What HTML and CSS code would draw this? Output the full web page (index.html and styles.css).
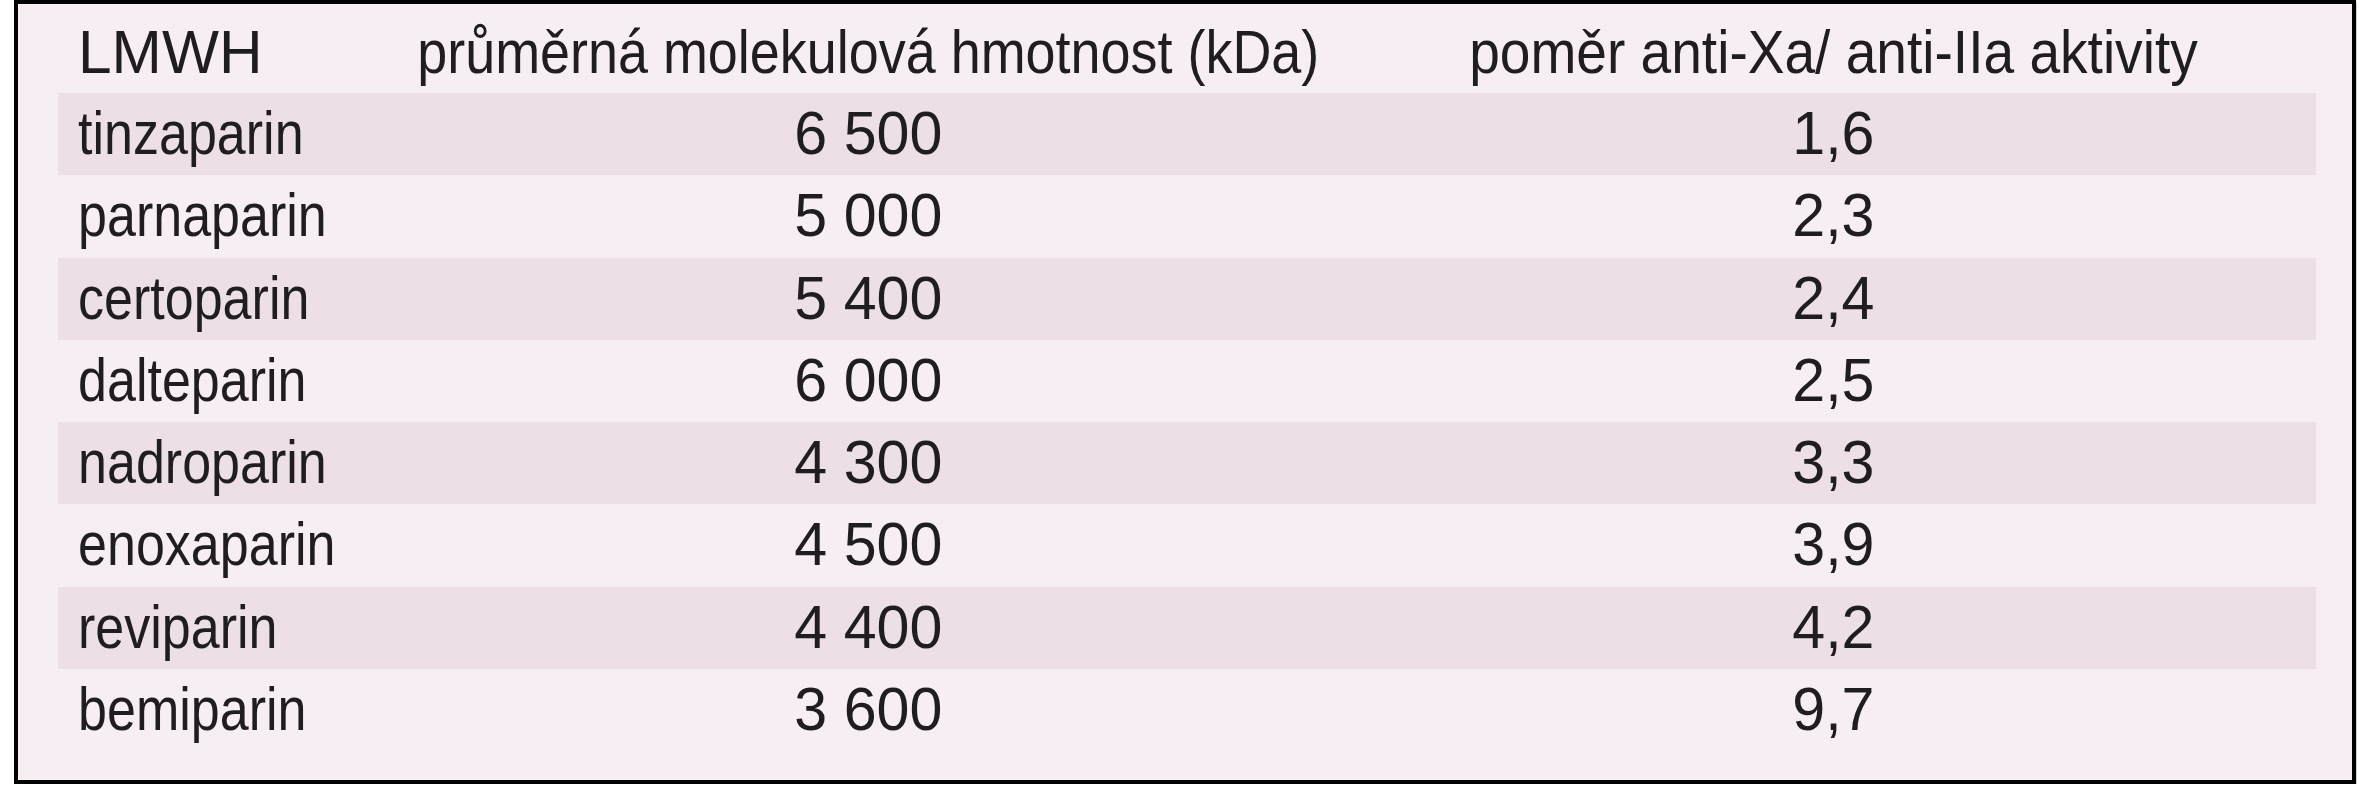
FILE: index.html
```html
<!DOCTYPE html>
<html lang="cs">
<head>
<meta charset="utf-8">
<title>LMWH</title>
<link rel="stylesheet" href="styles.css">
</head>
<body>
<div class="frame">
  <div class="table">
    <div class="row head">
      <div class="c1"><span class="t cap">LMWH</span></div>
      <div class="c2"><span class="t h2">průměrná molekulová hmotnost (kDa)</span></div>
      <div class="c3"><span class="t h3">poměr anti-Xa/ anti-IIa aktivity</span></div>
    </div>
    <div class="row odd"><div class="c1"><span class="t name">tinzaparin</span></div><div class="c2"><span class="t num">6 500</span></div><div class="c3"><span class="t num">1,6</span></div></div>
    <div class="row"><div class="c1"><span class="t name">parnaparin</span></div><div class="c2"><span class="t num">5 000</span></div><div class="c3"><span class="t num">2,3</span></div></div>
    <div class="row odd"><div class="c1"><span class="t name">certoparin</span></div><div class="c2"><span class="t num">5 400</span></div><div class="c3"><span class="t num">2,4</span></div></div>
    <div class="row"><div class="c1"><span class="t name">dalteparin</span></div><div class="c2"><span class="t num">6 000</span></div><div class="c3"><span class="t num">2,5</span></div></div>
    <div class="row odd"><div class="c1"><span class="t name">nadroparin</span></div><div class="c2"><span class="t num">4 300</span></div><div class="c3"><span class="t num">3,3</span></div></div>
    <div class="row"><div class="c1"><span class="t name">enoxaparin</span></div><div class="c2"><span class="t num">4 500</span></div><div class="c3"><span class="t num">3,9</span></div></div>
    <div class="row odd"><div class="c1"><span class="t name">reviparin</span></div><div class="c2"><span class="t num">4 400</span></div><div class="c3"><span class="t num">4,2</span></div></div>
    <div class="row"><div class="c1"><span class="t name">bemiparin</span></div><div class="c2"><span class="t num">3 600</span></div><div class="c3"><span class="t num">9,7</span></div></div>
  </div>
</div>
</body>
</html>
```
FILE: styles.css
```css
html, body {
  margin: 0;
  padding: 0;
  background: #ffffff;
}
body {
  font-family: "Liberation Sans", Arial, sans-serif;
  color: #1f1d22;
}
.frame {
  margin-left: 14px;
  width: 2258px;
  height: 776px;
  border: 4px solid #000;
  background: #f6eef3;
  box-shadow: 1px 2px 0 #d2d2d2;
  padding: 0 36px 0 40px;
  box-sizing: content-box;
}
.table {
  display: flex;
  flex-direction: column;
}
.row {
  display: grid;
  grid-template-columns: 328px 964px 1fr;
  height: 82.3px;
  line-height: 80px;
  font-size: 61px;
  white-space: nowrap;
}
.row.head {
  height: 89px;
  padding-top: 8px;
  box-sizing: border-box;
}
.row.odd {
  background: #ecdfe5;
}
.c1 {
  padding-left: 20px;
}
.c2, .c3 {
  display: flex;
  justify-content: center;
}
.t {
  display: inline-block;
  flex: none;
  transform-origin: center center;
}
.c1 .t {
  transform-origin: left center;
}
.name {
  transform: scaleX(0.853);
}
.cap {
  transform: scaleX(0.99);
}
.h2 {
  transform: scaleX(0.884);
}
.h3 {
  transform: scaleX(0.903);
}
.num {
  transform: scaleX(0.97);
}
```
